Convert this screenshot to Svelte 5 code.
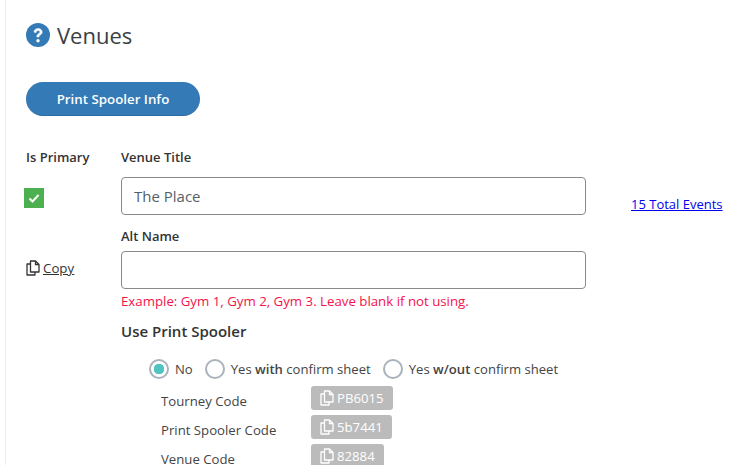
<script lang="ts">
    const codes = [
        { label: "Tourney Code", value: "PB6015" },
        { label: "Print Spooler Code", value: "5b7441" },
        { label: "Venue Code", value: "82884" },
    ];
</script>

{#snippet copyIcon()}
    <svg class="copy-icon" viewBox="0 0 14 16" width="14" height="16" fill="none" stroke="currentColor" stroke-width="1.3">
        <path d="M4.5 1h5l3.500 3.500V12H4.500z" stroke-linejoin="round" />
        <path d="M9.500 1v3.500H13" />
        <path d="M4.500 4H1v11h8v-3" stroke-linejoin="round" />
    </svg>
{/snippet}

<div class="page">
    <h1 class="title">
        <svg class="help" viewBox="0 0 24 24" width="24" height="24">
            <circle cx="12" cy="12" r="12" fill="#337ab7" />
            <path d="M8 9.2c0-2.4 1.9-3.7 4.1-3.7 2.3 0 4.1 1.4 4.1 3.5 0 1.800-1.200 2.500-2.200 3.200-.8.5-1 .9-1 1.800h-2.200c0-1.800.5-2.500 1.700-3.300.8-.6 1.400-1 1.400-1.700 0-.8-.8-1.400-1.800-1.400-1.100 0-1.800.7-1.900 1.900z" fill="#fff" stroke="#fff" stroke-width=".5" />
            <circle cx="12" cy="17.700" r="1.700" fill="#fff" />
        </svg>
        Venues
    </h1>

    <button class="info-btn">Print Spooler Info</button>

    <div class="venue">
        <div class="side">
            <div class="label">Is Primary</div>
            <div class="check">
                <svg viewBox="0 0 20 20" width="20" height="20">
                    <path d="M5.500 10.500l3 3 6-6.500" fill="none" stroke="#fff" stroke-width="2" />
                </svg>
            </div>
            <a class="copy" href="#copy">{@render copyIcon()}<span>Copy</span></a>
        </div>

        <div class="main">
            <div class="title-row">
                <div class="fields">
                    <label class="label" for="venue-title">Venue Title</label>
                    <input id="venue-title" value="The Place" />
                </div>
                <a class="events" href="#events">15 Total Events</a>
            </div>

            <div class="fields alt">
                <label class="label" for="alt-name">Alt Name</label>
                <input id="alt-name" />
                <div class="hint">Example: Gym 1, Gym 2, Gym 3. Leave blank if not using.</div>
            </div>

            <div class="spooler-title">Use Print Spooler</div>

            <div class="radios">
                <span class="radio"><i class="dot on"></i>No</span>
                <span class="radio"><i class="dot"></i><span>Yes <b>with</b> confirm sheet</span></span>
                <span class="radio"><i class="dot"></i><span>Yes <b>w/out</b> confirm sheet</span></span>
            </div>

            <div class="codes">
                {#each codes as code}
                    <div class="code-name">{code.label}</div>
                    <div><span class="code">{@render copyIcon()}{code.value}</span></div>
                {/each}
            </div>
        </div>
    </div>
</div>

<style>
    :global(body) {
        margin: 0;
        background: #fff;
        overflow: hidden;
    }

    .page {
        height: 465px;
        margin-left: 5px;
        padding: 18px 0 0 20px;
        box-sizing: border-box;
        border-left: 1px solid #eeeeee;
        overflow: hidden;
        font-family: "Open Sans", sans-serif;
        font-size: 13px;
        color: #333;
    }

    .title {
        display: flex;
        align-items: center;
        gap: 7px;
        margin: 0;
        height: 33px;
        font-size: 22px;
        font-weight: 400;
        color: #3a3f45;
    }

    .info-btn {
        display: block;
        width: 174px;
        height: 34px;
        margin-top: 31px;
        border: 0;
        border-bottom: 1px solid #2e6da4;
        border-radius: 17px;
        background: #337ab7;
        color: #fff;
        font-family: inherit;
        font-size: 13.300px;
        font-weight: 600;
    }

    .venue {
        display: flex;
        margin-top: 32px;
    }

    .side {
        width: 95px;
        flex-shrink: 0;
    }

    .label {
        display: block;
        height: 18px;
        line-height: 18px;
        font-size: 13px;
        font-weight: 600;
        color: #333;
    }

    .check {
        width: 20px;
        height: 20px;
        margin: 22px 0 0 -2px;
        background: #4caf50;
    }

    .copy {
        display: flex;
        align-items: center;
        gap: 3px;
        margin-top: 51px;
        color: #333;
        font-size: 13.300px;
    }

    .copy span {
        text-decoration: underline;
    }

    .copy-icon {
        flex-shrink: 0;
    }

    .main {
        flex: 1;
    }

    .title-row {
        display: flex;
        align-items: flex-end;
    }

    .fields {
        width: 465px;
    }

    input {
        display: block;
        width: 100%;
        height: 38px;
        margin-top: 11px;
        padding: 0 12px;
        box-sizing: border-box;
        border: 1px solid #8a8a8a;
        border-radius: 4px;
        font-family: inherit;
        font-size: 15px;
        color: #555e68;
        outline: none;
    }

    .events {
        margin: 0 0 2px 45px;
        color: #0000ee;
        font-size: 13px;
        white-space: nowrap;
    }

    .alt {
        margin-top: 12px;
    }

    .alt input {
        margin-top: 6px;
    }

    .hint {
        margin-top: 2px;
        line-height: 20px;
        font-size: 13.250px;
        color: #f5114a;
        white-space: nowrap;
    }

    .spooler-title {
        margin-top: 10px;
        line-height: 20px;
        font-size: 15px;
        font-weight: 600;
        color: #333;
    }

    .radios {
        display: flex;
        gap: 12px;
        margin: 18px 0 0 28px;
        height: 20px;
    }

    .radio {
        display: flex;
        align-items: center;
        gap: 6px;
        font-size: 13.100px;
        color: #444;
        white-space: nowrap;
    }

    .radio b {
        font-weight: 600;
    }

    .dot {
        width: 20px;
        height: 20px;
        box-sizing: border-box;
        border: 2px solid #a9b2bd;
        border-radius: 50%;
        background: #fff;
    }

    .dot.on {
        background: radial-gradient(circle, #4fc4c0 0 5px, #fff 5.500px);
    }

    .codes {
        display: grid;
        grid-template-columns: 150px auto;
        grid-auto-rows: 29px;
        justify-content: start;
        align-items: start;
        margin: 7px 0 0 40px;
    }

    .code-name {
        padding-top: 6px;
        font-size: 13.200px;
        line-height: 18px;
        color: #444;
        white-space: nowrap;
    }

    .code {
        display: inline-flex;
        align-items: center;
        gap: 3px;
        height: 24px;
        padding: 0 9px;
        border-radius: 3px;
        background: #bbbbbb;
        color: #fff;
        font-size: 13.200px;
    }
</style>
